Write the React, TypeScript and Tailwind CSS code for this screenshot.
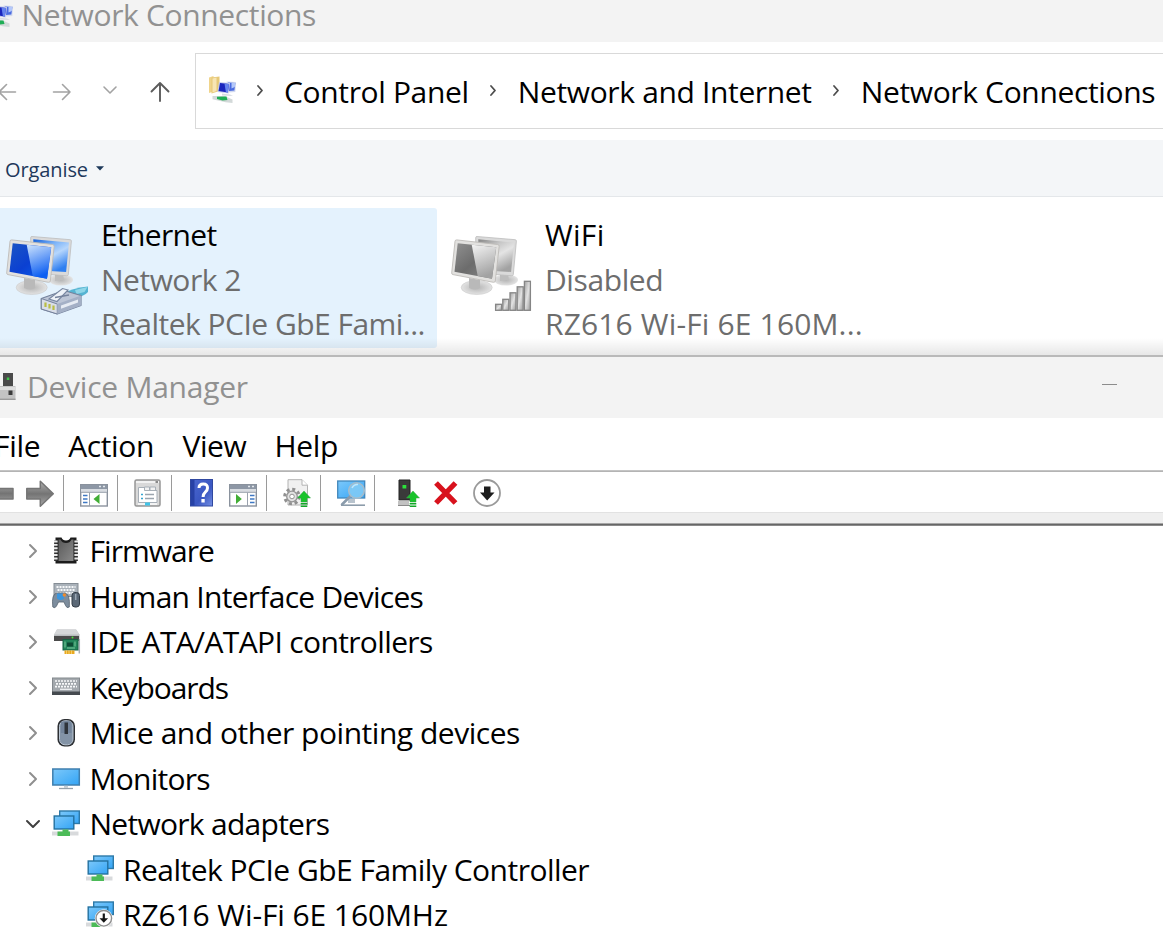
import type { ReactNode } from 'react';

interface IconProps {
  className?: string;
}

interface TreeItem {
  label: string;
  icon: ReactNode;
  tracking: string;
  expanded?: boolean;
  child?: boolean;
}

/* ---------- Explorer icons ---------- */

function NetworkFolderIcon({ className }: IconProps) {
  return (
    <svg className={className} width="28" height="28" viewBox="0 0 28 28">
      <path d="M1 1.500L5.500 0v15.500L1 17z" fill="#f0d48a" />
      <path d="M3.500 1.500l8-1V15l-8 2.500z" fill="#e6c877" />
      <path d="M4.500 2.500l4-1v13.500l-4 1.500z" fill="#f7e5b4" />
      <path d="M18.500 5.500l9.800.5-1 10-6.300.5z" fill="#d3daee" />
      <path d="M20 6.500l7.300.5-.9 7.500-5.400.5z" fill="#4a6be0" />
      <path d="M23.500 6.800l3.800.2-.5 4-3.300 1.500z" fill="#b4c8fa" />
      <path d="M11 6l11 1-1.300 10.500L9.500 16z" fill="#c6cdec" />
      <path d="M12 7l9 .9-1.100 8.600L10.500 15z" fill="#1a25bd" />
      <path d="M16.500 7.500l4.500.4-1.100 8.600-2-.3z" fill="#6684ee" />
      <path d="M14 17.500l8 1 3 1.500-11-.5z" fill="#d8dce2" />
      <path d="M4.500 20l12 0 8 3.500v3.500l-7-.8-13-3z" fill="#d3d9d9" />
      <path d="M9 20.800l9.500-.3 1 3.500-5 .5-5.500-1.500z" fill="#1fae55" />
    </svg>
  );
}

function Stroke({ d, color, width, box }: { d: string; color: string; width: number; box: [number, number] }) {
  return (
    <svg width={box[0]} height={box[1]} viewBox={`0 0 ${box[0]} ${box[1]}`} fill="none" className="shrink-0">
      <path d={d} stroke={color} strokeWidth={width} strokeLinecap="round" strokeLinejoin="round" />
    </svg>
  );
}

function PcPair({ gray, children }: { gray?: boolean; children: ReactNode }) {
  const id = gray ? 'pc-gray' : 'pc-blue';
  return (
    <svg width="84" height="84" viewBox="0 0 84 84" className="shrink-0">
      <defs>
        <linearGradient id={`${id}-dark`} x1="0" y1="0" x2="1" y2="1">
          <stop offset="0" stopColor={gray ? '#909090' : '#1b55c4'} />
          <stop offset=".5" stopColor={gray ? '#6c6c6c' : '#0b40d2'} />
          <stop offset="1" stopColor={gray ? '#8a8a8a' : '#0b62ef'} />
        </linearGradient>
        <linearGradient id={`${id}-light`} x1="0" y1="0" x2=".3" y2="1">
          <stop offset="0" stopColor={gray ? '#f4f4f4' : '#cfe4fc'} />
          <stop offset="1" stopColor={gray ? '#a2a2a2' : '#0f60f2'} />
        </linearGradient>
        <linearGradient id={`${id}-back`} x1="0" y1="0" x2=".6" y2="1">
          <stop offset="0" stopColor={gray ? '#858585' : '#1560d8'} />
          <stop offset=".35" stopColor={gray ? '#c8c8c8' : '#7db4f8'} />
          <stop offset=".6" stopColor={gray ? '#e4e4e4' : '#b6d6fc'} />
          <stop offset="1" stopColor={gray ? '#a2a2a2' : '#2f7ff0'} />
        </linearGradient>
        <radialGradient id={`${id}-foot`}>
          <stop offset="0" stopColor="#b4b4b4" />
          <stop offset="1" stopColor="#e3e3e3" />
        </radialGradient>
      </defs>
      <ellipse cx="56" cy="46" rx="12" ry="5.500" fill={`url(#${id}-foot)`} />
      <path d="M50 40h8l1 6-9 1z" fill="#bdbdbd" />
      <path d="M25.700 3.700q0-1.300 1.300-1.200l38.200 3.200q1.300.2 1.200 1.400l-3.100 33.500q-.2 1.300-1.500 1.200L26 39z" fill="#dadada" stroke="#bcbcbc" strokeWidth=".8" />
      <path d="M28.300 5.300L64 8.500l-2.900 29.500-32.800-2z" fill={`url(#${id}-back)`} />
      <ellipse cx="26.700" cy="53.500" rx="15.500" ry="7" fill={`url(#${id}-foot)`} stroke="#cacaca" strokeWidth=".6" />
      <path d="M19 44l11 2v8q-5 3-11 0z" fill="#b9b9b9" />
      <path d="M5 7.300q.2-1.500 1.700-1.400l41 4.600q1.700.3 1.500 1.900L45.300 47q-.2 1.500-1.900 1.300L3 40.600q-1.400-.2-1.300-1.700z" fill="#e2e1df" stroke="#bdbbb8" strokeWidth=".9" />
      <path d="M7.700 9.200L46.200 13.300l-4.200 31.400-37.500-7z" fill={`url(#${id}-dark)`} />
      <path d="M21.700 10.700l24.500 2.600-4.200 31.400-14.300-2.700z" fill={`url(#${id}-light)`} />
      {children}
    </svg>
  );
}

function EthernetPlug() {
  return (
    <g>
      <path d="M58 60q8-6 25-7.500V58q-4 4-12 6z" fill="#55b4d2" />
      <path d="M70 56l12.500-3-3 5-8 2z" fill="#8fd6e8" />
      <path d="M36.300 64.500L49 60l10-3.500 17 5V71.500L52.300 80l-16-5z" fill="#bcc5d6" stroke="#75829c" strokeWidth="1.200" strokeLinejoin="round" />
      <path d="M36.300 64.500l16 5.500v10l-16-5z" fill="#d9dee8" stroke="#75829c" />
      <path d="M52.300 70L76 61.500v10L52.300 80z" fill="#a4b0c6" />
      <path d="M56 71.500l17-6v3l-17 6.300z" fill="#e6ebf3" />
      <path d="M44 65l13.500-10.500 5.500 1.500-11 11.500z" fill="#eef2f8" stroke="#7786a0" strokeWidth="1.100" />
      <path d="M50 63.500l14-2.500" stroke="#75829c" strokeWidth="1.300" />
      <path d="M40.500 68.500v4.500M44.500 70v4.500M48.500 71.500v4.500" stroke="#b9bd45" strokeWidth="2.200" />
    </g>
  );
}

const SIGNAL_BARS = [6, 11, 17.500, 23.500, 29];

function SignalBars() {
  return (
    <g>
      <defs>
        <linearGradient id="signal" x1="0" x2="1" y1="0" y2="1">
          <stop offset="0" stopColor="#a2a2a2" />
          <stop offset=".5" stopColor="#e2e2e2" />
          <stop offset="1" stopColor="#9a9a9a" />
        </linearGradient>
      </defs>
      {SIGNAL_BARS.map((h, i) => (
        <rect key={h} x={45.600 + i * 7.200} y={76.300 - h} width="6" height={h} fill="url(#signal)" stroke="#858585" strokeWidth="1.300" />
      ))}
    </g>
  );
}

/* ---------- Device Manager icons ---------- */

function Icon({ children }: { children: ReactNode }) {
  return (
    <svg width="28" height="28" viewBox="0 0 28 28" className="shrink-0 overflow-visible">
      {children}
    </svg>
  );
}

const arrowGradient = (
  <linearGradient id="arrow" x1="0" x2="0" y1="0" y2="1">
    <stop offset="0" stopColor="#b0b0b0" />
    <stop offset=".5" stopColor="#747474" />
    <stop offset="1" stopColor="#a8a8a8" />
  </linearGradient>
);

function BackIcon() {
  return (
    <Icon>
      <defs>{arrowGradient}</defs>
      <path d="M27 9.500v10.500H9V27L-4 14.500 9 2v7.500z" fill="url(#arrow)" stroke="#757575" strokeWidth="1.500" strokeLinejoin="round" />
    </Icon>
  );
}

function ForwardIcon() {
  return (
    <Icon>
      <path d="M.8 9.500h13.500V2.300L27.300 14.800 14.300 27.300V20H.8z" fill="url(#arrow)" stroke="#757575" strokeWidth="1.500" strokeLinejoin="round" />
    </Icon>
  );
}

function PaneIcon({ right }: { right?: boolean }) {
  return (
    <Icon>
      <rect x=".7" y="5.700" width="26.600" height="21.300" fill="#fff" stroke="#8a929d" strokeWidth="1.400" />
      <rect x="1" y="6" width="26" height="4" fill="#8d97a5" />
      <path d="M19 7.500h2M23 7.500h2" stroke="#e4e8ed" strokeWidth="1.500" />
      <rect x="1" y="10" width="26" height="3.500" fill="#d9dde2" />
      <path d="M1 13.300h26" stroke="#9aa2ad" />
      {right ? (
        <g>
          <path d="M18.500 13.500V27" stroke="#9aa2ad" />
          <path d="M21 16.500h4.500M21 20h4.500M21 23.500h4.500" stroke="#3e78c4" strokeWidth="1.500" />
          <path d="M7 15l5.800 5L7 25z" fill="#41ad35" />
        </g>
      ) : (
        <g>
          <path d="M9.500 13.500V27" stroke="#9aa2ad" />
          <path d="M3 16.500h4.500M3 20h4.500M3 23.500h4.500" stroke="#3e78c4" strokeWidth="1.500" />
          <path d="M19.500 15l-6 5 6 5z" fill="#41ad35" />
        </g>
      )}
    </Icon>
  );
}

function PropertiesIcon() {
  return (
    <Icon>
      <rect x="1" y="1" width="25" height="26" rx="1.500" fill="#d9d9d9" stroke="#969696" strokeWidth="1.500" />
      <path d="M2 3h23" stroke="#f2f2f2" strokeWidth="2" />
      <path d="M21.500 3h2.500" stroke="#666" strokeWidth="1.500" />
      <path d="M4.500 8.500h6v3h12.500v12H4.500z" fill="#fff" stroke="#a7afb7" />
      <path d="M10.500 11V8h5v3M16 11V8h5.500v3" fill="#f2f2f2" stroke="#a7afb7" />
      <path d="M7 15.500h2M7 19.500h2" stroke="#36a6d2" strokeWidth="1.500" />
      <path d="M11 15.500h9M11 19.500h9" stroke="#9ba5ae" strokeWidth="1.300" />
      <path d="M4 25h19" stroke="#f4f4f4" strokeWidth="2" />
      <path d="M11 25h5" stroke="#42c4e8" strokeWidth="3" />
    </Icon>
  );
}

function HelpIcon() {
  return (
    <Icon>
      <defs>
        <linearGradient id="help" x1="0" x2="1" y1="0" y2="1">
          <stop offset="0" stopColor="#4c68cf" />
          <stop offset=".6" stopColor="#3a57c2" />
          <stop offset="1" stopColor="#7590e4" />
        </linearGradient>
      </defs>
      <rect x="2.500" y=".5" width="22" height="26.500" fill="url(#help)" stroke="#3048a0" />
      <path d="M3 1h3.500v25.500H3z" fill="#2741a5" />
      <path d="M11 9q0-4 4.300-4t4.200 4q0 2.300-2.200 4.200t-2.200 4.800" fill="none" stroke="#fff" strokeWidth="3" />
      <rect x="13.400" y="20" width="3.300" height="3.500" fill="#fff" />
    </Icon>
  );
}

function GreenUp({ x = 0, y = 0 }: { x?: number; y?: number }) {
  return (
    <g transform={`translate(${x} ${y})`} fill="#19c32b">
      <path d="M6.500 0L13 7H9.500v4h-6V7H0z" stroke="#3ba44a" strokeWidth=".5" />
      <path d="M3.200 12h6.600v1.500H3.200zM3.200 14.500h6.600v1.600H3.200z" fill="#12a728" />
    </g>
  );
}

function UpdateDriverIcon() {
  return (
    <Icon>
      <path d="M5 .7h14l5.500 5.500V26H5z" fill="#f0f0f0" stroke="#b2b2b2" />
      <path d="M19 .7v5.500h5.500" fill="#fff" stroke="#b2b2b2" />
      <circle cx="9" cy="17.500" r="7.300" fill="none" stroke="#909090" strokeWidth="3" strokeDasharray="3 2.730" />
      <circle cx="9" cy="17.500" r="5.300" fill="#e2e2e2" stroke="#949494" strokeWidth="1.300" />
      <circle cx="9" cy="17.500" r="2.300" fill="#fff" stroke="#949494" />
      <GreenUp x={14.500} y={12} />
    </Icon>
  );
}

const screenGradient = (
  <linearGradient id="screen" x1="0" x2="1" y1="0" y2="1">
    <stop offset="0" stopColor="#7cc8fa" />
    <stop offset="1" stopColor="#33a4f5" />
  </linearGradient>
);

function ScanIcon() {
  return (
    <Icon>
      <defs>{screenGradient}</defs>
      <rect x=".7" y="2" width="27" height="17" fill="url(#screen)" stroke="#4387bb" strokeWidth="1.300" />
      <path d="M11 20h7v4h-7z" fill="#b8c3cd" />
      <path d="M4 26.200h24" stroke="#8c9caa" strokeWidth="1.600" />
      <path d="M13.500 17L5 25.500" stroke="#8a9bab" strokeWidth="2.500" strokeLinecap="round" />
      <circle cx="19.500" cy="11.500" r="7.800" fill="#7fcaf5" fillOpacity=".9" stroke="#a5bccb" strokeWidth="1.600" />
      <path d="M15 9q2-4 6-3.500" fill="none" stroke="#c1e7fb" strokeWidth="1.500" />
    </Icon>
  );
}

function AddDeviceIcon() {
  return (
    <Icon>
      <path d="M8 1h11v20H8z" fill="#3a3a3a" stroke="#222" />
      <rect x="11.500" y="6" width="3.800" height="3.500" fill="#2be23a" />
      <path d="M7 21.500h11v5H7z" fill="#c2c2c2" />
      <path d="M7 26.500h12" stroke="#8a8a8a" />
      <GreenUp x={15.500} y={12} />
    </Icon>
  );
}

function RemoveIcon() {
  return (
    <Icon>
      <path d="M4 4l19.500 20M23.500 4L4 24" stroke="#d8121d" strokeWidth="5.300" />
    </Icon>
  );
}

function DisableIcon() {
  return (
    <Icon>
      <circle cx="14" cy="14" r="13" fill="#fff" stroke="#9a9a9a" strokeWidth="1.800" />
      <path d="M11 7.500h6.500V13.500h4L14.200 21.500 7 13.500h4z" fill="#1d1d1d" />
    </Icon>
  );
}

function DeviceManagerIcon() {
  return (
    <Icon>
      <path d="M14 0h10v14H14z" fill="#4a4a4a" />
      <rect x="17.800" y="4.500" width="2.500" height="2.500" fill="#3fc54a" />
      <path d="M0 13h26.500v14H0z" fill="#c3c3c3" />
      <path d="M0 14h26v3H0z" fill="#dedede" />
      <rect x="19.500" y="17.500" width="4" height="4.500" fill="#3c3c3c" />
      <path d="M0 26.300h26.500" stroke="#9b9b9b" strokeWidth="1.400" />
    </Icon>
  );
}

function FirmwareIcon() {
  return (
    <Icon>
      <defs>
        <linearGradient id="chip" x1="0" x2="1" y1="0" y2="1">
          <stop offset="0" stopColor="#5a5a5a" />
          <stop offset="1" stopColor="#8a8a8a" />
        </linearGradient>
      </defs>
      <path d="M3.500.5h6q1 3 4.500 3t4.500-3h6v26h-21z" fill="#1c1c1c" />
      <path d="M6.500 2.500h2q1.500 3.500 5.500 3.500t5.500-3.500h2v21.500h-15z" fill="url(#chip)" />
      <path d="M3.800 3.500V24M24.200 3.500V24" stroke="#333" strokeWidth="3.400" />
      <path d="M3.800 3.500V24M24.200 3.500V24" stroke="#e8e8e8" strokeWidth="3.600" strokeDasharray="1.900 1.500" />
    </Icon>
  );
}

function HidIcon() {
  return (
    <Icon>
      <rect x="2" y="1.500" width="24" height="13" fill="#aab2ba" stroke="#858d95" />
      <path d="M4.500 5h19M5.500 8h17M4.500 11h19" stroke="#f5f7f9" strokeWidth="1.800" strokeDasharray="2 1" />
      <path d="M.8 25q-1.500-13 4-14h8q5.500 1 4.500 14-2.500 1.800-3.800-1.500l-1.500-3.500H6.500L4.500 24Q3 27 .8 25z" fill="#7d8d9d" stroke="#56626e" strokeWidth=".8" />
      <path d="M5 11.500h7v5q-3.500 3-7 0z" fill="#3c95dd" />
      <circle cx="12.300" cy="13" r="1.700" fill="#f08a2c" />
      <rect x="20" y="10.500" width="7.500" height="14.500" rx="3" fill="#5b6876" stroke="#333d47" />
      <path d="M23.700 12v6" stroke="#9ba8b5" strokeWidth="1.500" />
    </Icon>
  );
}

function IdeIcon() {
  return (
    <Icon>
      <path d="M5 1.500h19l3.500 5V13H2V7z" fill="#b9bcbf" />
      <path d="M5 1.500h19l3.500 5H2z" fill="#d5d7d9" />
      <path d="M2 8h25v5H2z" fill="#4a4a4a" />
      <path d="M27.300 11v14.500" stroke="#a9b0b7" strokeWidth="1.500" />
      <rect x="11" y="11.500" width="15" height="10.500" fill="#23855a" stroke="#176343" />
      <rect x="15" y="14.500" width="6" height="4" fill="#0d4b33" />
      <path d="M13 13.500v6M23 13.500v5M15 20h8" stroke="#7cc99c" />
      <circle cx="20.500" cy="9.500" r="1" fill="#4ce03c" />
      <path d="M12.500 22.500h10V26h-10z" fill="#e8a820" />
      <path d="M14.500 22.500V26M17 22.500V26M19.500 22.500V26" stroke="#f8d879" strokeWidth=".8" />
    </Icon>
  );
}

function KeyboardIcon() {
  return (
    <Icon>
      <rect x=".5" y="5" width="27" height="15" fill="#a3a8ad" stroke="#84898e" />
      <path d="M0 18.500h28V22H0z" fill="#454a4f" />
      <path d="M3 8h22M4 10.800h20M3 13.600h22" stroke="#f7f8f9" strokeWidth="1.700" strokeDasharray="2 1" />
      <path d="M8 16.300h12" stroke="#f0f1f3" strokeWidth="1.300" />
    </Icon>
  );
}

function MouseIcon() {
  return (
    <Icon>
      <rect x="5.500" y="0" width="17.500" height="27.500" rx="7" fill="#2c2f33" />
      <rect x="7.500" y="1.800" width="13.500" height="24" rx="5.500" fill="#8393a6" stroke="#bac6d3" />
      <path d="M9 3q5-2 10.500 0v11H9z" fill="#73849a" />
      <rect x="12.500" y="3.500" width="3.500" height="11.500" fill="#2f343a" />
    </Icon>
  );
}

function MonitorIcon() {
  return (
    <Icon>
      <rect x=".8" y="5" width="26.500" height="16" fill="url(#screen)" stroke="#3f7fae" strokeWidth="1.500" />
      <path d="M12 21.800h4v2h-4z" fill="#c4cdd4" />
      <path d="M7 24.500h14" stroke="#96a2ac" strokeWidth="1.300" />
    </Icon>
  );
}

function AdapterIcon({ disabled }: { disabled?: boolean }) {
  return (
    <Icon>
      <rect x="7.700" y="1" width="19.600" height="12.500" fill="url(#screen)" stroke="#2d79a8" strokeWidth="1.400" />
      <rect x="2.200" y="6" width="19.600" height="13" fill="url(#screen)" stroke="#23719f" strokeWidth="1.400" />
      <path d="M0 21.500h26.500v4H0z" fill="#d8dadc" />
      <path d="M10.500 19.500h6v2h1.500V26H5.500v-4.500h5z" fill="#4cbb58" />
      {disabled && (
        <g>
          <circle cx="17.800" cy="17.300" r="9" fill="#fff" />
          <circle cx="17.800" cy="17.300" r="7.800" fill="#fff" stroke="#8e8e8e" strokeWidth="1.400" />
          <path d="M17.800 12.500v7" stroke="#161616" strokeWidth="2.200" />
          <path d="M13.500 17.300h8.600L17.800 21.800z" fill="#161616" />
        </g>
      )}
    </Icon>
  );
}

/* ---------- Data ---------- */

const TREE: TreeItem[] = [
  { label: 'Firmware', icon: <FirmwareIcon />, tracking: 'tracking-[-0.95px]' },
  { label: 'Human Interface Devices', icon: <HidIcon />, tracking: 'tracking-[-0.72px]' },
  { label: 'IDE ATA/ATAPI controllers', icon: <IdeIcon />, tracking: 'tracking-[-0.64px]' },
  { label: 'Keyboards', icon: <KeyboardIcon />, tracking: 'tracking-[-1.1px]' },
  { label: 'Mice and other pointing devices', icon: <MouseIcon />, tracking: 'tracking-[-0.48px]' },
  { label: 'Monitors', icon: <MonitorIcon />, tracking: 'tracking-[-0.75px]' },
  { label: 'Network adapters', icon: <AdapterIcon />, tracking: 'tracking-[-0.72px]', expanded: true },
  { label: 'Realtek PCIe GbE Family Controller', icon: <AdapterIcon />, tracking: 'tracking-[-0.52px]', child: true },
  { label: 'RZ616 Wi-Fi 6E 160MHz', icon: <AdapterIcon disabled />, tracking: 'tracking-[-0.1px]', child: true },
];

const TOOLBAR: ReactNode[][] = [
  [<PaneIcon />],
  [<PropertiesIcon />],
  [<HelpIcon />, <PaneIcon right />],
  [<UpdateDriverIcon />],
  [<ScanIcon />],
  [<AddDeviceIcon />, <RemoveIcon />, <DisableIcon />],
];

/* ---------- Windows ---------- */

function Crumb({ children }: { children: ReactNode }) {
  return (
    <>
      <Stroke d="M2 2l4 4.500L2 11" color="#4d4d4d" width={1.800} box={[8, 13]} />
      <span className="pt-[2px] tracking-[-0.35px]">{children}</span>
    </>
  );
}

function NetworkConnections() {
  return (
    <section className="h-[355px] overflow-hidden bg-white">
      <header className="flex h-[42px] items-start bg-[#f3f3f3] text-[#919191]">
        <NetworkFolderIcon className="-ml-[15px] shrink-0" />
        <h1 className="ml-[8.500px] tracking-[-0.35px] leading-[29px]">Network Connections</h1>
      </header>

      <div className="flex h-[98px] items-center">
        <nav className="flex w-[195px] shrink-0 items-center pt-px">
          <div className="-ml-[3px] flex">
            <Stroke d="M18.500 10H2M9.500 2.500L2 10l7.500 7.500" color="#a3a3a3" width={1.600} box={[20, 20]} />
          </div>
          <div className="ml-[35px] flex">
            <Stroke d="M1.500 10H18M10.500 2.500L18 10l-7.500 7.500" color="#a3a3a3" width={1.600} box={[20, 20]} />
          </div>
          <div className="mt-[-3px] ml-[29.500px] flex">
            <Stroke d="M2 2l6 6 6-6" color="#a3a3a3" width={1.600} box={[16, 10]} />
          </div>
          <div className="mt-px ml-[32.500px] flex">
            <Stroke d="M10 20V2M1.500 10.500L10 2l8.500 8.500" color="#5c5c5c" width={1.900} box={[20, 22]} />
          </div>
        </nav>
        <div className="-mt-px flex h-[76px] flex-1 items-center overflow-hidden whitespace-nowrap border-y border-l border-[#d9d9d9] text-black">
          <NetworkFolderIcon className="-mt-px ml-[12px] shrink-0" />
          <span className="ml-[19.500px] flex shrink-0 items-center gap-[20.500px]">
            <Crumb>Control Panel</Crumb>
            <Crumb>Network and Internet</Crumb>
            <Crumb>Network Connections</Crumb>
          </span>
        </div>
      </div>

      <div className="flex h-[57px] items-center gap-[8px] border-b border-[#e4e7ea] bg-[#f4f6f8] pl-[5px] text-[20px] text-[#1e395b]">
        <span className="pt-[4px] tracking-[-0.1px]">Organise</span>
        <svg width="8" height="5" viewBox="0 0 8 5">
          <path d="M0 .3h8L4 4.500z" fill="#1e395b" />
        </svg>
      </div>

      <div className="relative flex pt-[11px]">
        <div className="flex h-[140px] w-[437px] items-start rounded-r-[3px] bg-[#e4f2fd] pt-[5px] pl-[5px]">
          <div className="mt-[21px]">
            <PcPair>
              <EthernetPlug />
            </PcPair>
          </div>
          <div className="ml-[12px] flex flex-col whitespace-nowrap leading-[44.600px] text-[#6d6d6d]">
            <span className="tracking-[-0.65px] text-black">Ethernet</span>
            <span className="tracking-[-0.5px]">Network 2</span>
            <span className="tracking-[-0.52px]">Realtek PCIe GbE Fami...</span>
          </div>
        </div>
        <div className="flex h-[140px] items-start pt-[5px] pl-[13px]">
          <div className="mt-[21px]">
            <PcPair gray>
              <SignalBars />
            </PcPair>
          </div>
          <div className="ml-[11px] flex flex-col whitespace-nowrap leading-[44.600px] text-[#6d6d6d]">
            <span className="tracking-[0.3px] text-black">WiFi</span>
            <span className="tracking-[-0.4px]">Disabled</span>
            <span className="tracking-[0.15px]">RZ616 Wi-Fi 6E 160M...</span>
          </div>
        </div>
        <div className="absolute inset-x-0 top-[141px] h-[18px] bg-linear-to-b from-black/0 to-black/10" />
      </div>
    </section>
  );
}

function DeviceManager() {
  return (
    <section className="h-[577px] overflow-hidden border-t-2 border-[#b9b9b9] bg-white text-black">
      <header className="flex h-[61px] items-center bg-[#f3f3f3] text-[#919191]">
        <div className="-mt-[2px] -ml-[11px]">
          <DeviceManagerIcon />
        </div>
        <h1 className="mt-[-1px] ml-[10px] tracking-[-0.25px]">Device Manager</h1>
        <div className="mt-[-6px] mr-[46px] ml-auto h-px w-[15px] bg-[#8c8c8c]" />
      </header>

      <nav className="flex h-[53px] items-center border-b border-[#c4c4c4] pt-[4px]">
        <span className="-ml-[6px] tracking-[-0.3px]">File</span>
        <span className="ml-[28px] tracking-[-0.4px]">Action</span>
        <span className="ml-[28.500px] tracking-[-0.4px]">View</span>
        <span className="ml-[28px] tracking-[-0.3px]">Help</span>
      </nav>

      <div className="flex h-[42px] items-center border-t border-b border-t-[#b4b4b4] border-b-[#e2e2e2] pt-[2px]">
        <div className="-ml-[14px] flex gap-[12px] pr-[9px]">
          <BackIcon />
          <ForwardIcon />
        </div>
        {TOOLBAR.map((group, i) => (
          <div key={i} className="flex h-[36px] items-center gap-[13px] border-l border-[#9a9a9a] pr-[9px] pl-[16px]">
            {group.map((icon, j) => (
              <div key={j}>{icon}</div>
            ))}
          </div>
        ))}
      </div>

      <div className="h-[10px] bg-[#efefef]" />
      <div className="h-[3px] border-t border-b border-t-[#a6a6a6] border-b-[#8a8a8a] bg-[#666]" />

      <ul className="pt-[2.500px]">
        {TREE.map((item) => (
          <li key={item.label} className={item.child ? 'flex h-[45.500px] items-center pl-[86px]' : 'flex h-[45.500px] items-center pl-[25px]'}>
            {!item.child && (
              <div className="mr-[11px] flex w-[16px] justify-center">
                {item.expanded ? (
                  <Stroke d="M2 2l6 6 6-6" color="#404040" width={2} box={[16, 10]} />
                ) : (
                  <Stroke d="M2 2l6 6-6 6" color="#8f8f8f" width={2} box={[10, 16]} />
                )}
              </div>
            )}
            <div className="-mt-px">{item.icon}</div>
            <span className={`${item.child ? 'ml-[9px]' : 'ml-[9.500px]'} whitespace-nowrap ${item.tracking}`}>{item.label}</span>
          </li>
        ))}
      </ul>
    </section>
  );
}

export default function App() {
  return (
    <main className="h-[932px] w-[1163px] overflow-hidden bg-white font-['Open_Sans','Noto_Sans',sans-serif] text-[30px] leading-none">
      <NetworkConnections />
      <DeviceManager />
    </main>
  );
}
